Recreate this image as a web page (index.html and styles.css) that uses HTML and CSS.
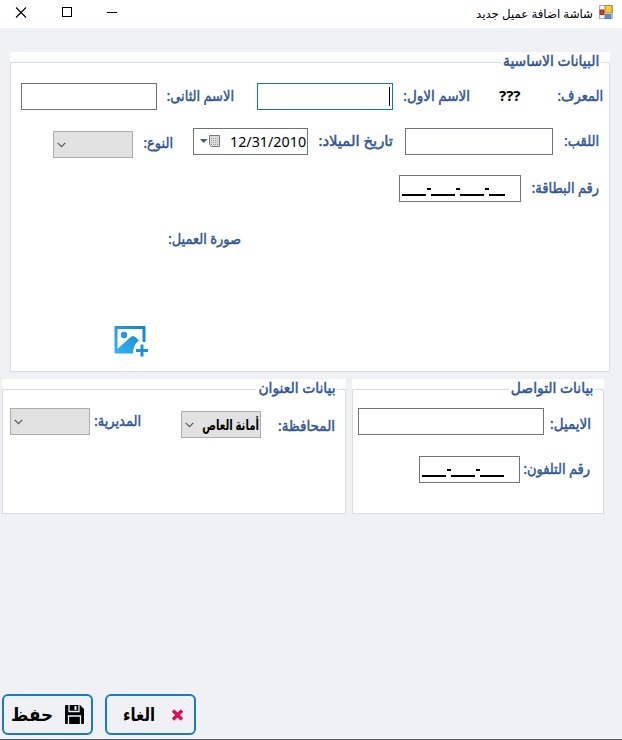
FILE: index.html
```html
<!DOCTYPE html>
<html lang="ar">
<head>
<meta charset="utf-8">
<title>شاشة اضافة عميل جديد</title>
<link rel="stylesheet" href="styles.css">
</head>
<body>
<div class="window">
  <header class="titlebar">
    <svg class="controls" width="120" height="28" viewBox="0 0 120 28" fill="none" stroke="#000" stroke-width="1.1">
      <path d="M16 7.5l10 10M26 7.5l-10 10"/>
      <path d="M62.5 7.5h9v9h-9zM107 12.5h10" stroke-width="1" shape-rendering="crispEdges"/>
    </svg>
    <span class="title">شاشة اضافة عميل جديد</span>
    <svg class="appicon" width="14" height="14" viewBox="0 0 14 14">
      <rect x=".5" y=".5" width="13" height="13" fill="#eef2f7" stroke="#aab4c0"/>
      <rect x="6" y=".5" width="7" height="7.500" fill="#f5c93c" stroke="#a98526" stroke-width=".8"/>
      <rect x="1" y="5" width="4" height="4.500" fill="#d83a2c" stroke="#8f2018" stroke-width=".8"/>
      <rect x="6" y="9.500" width="6" height="4" fill="#5c8fd6" stroke="#456ca5" stroke-width=".7"/>
    </svg>
  </header>

  <main class="form">
    <section class="group main-group">
      <h2 class="legend">البيانات الاساسية</h2>
      <div class="frame">
        <div class="row names">
          <div class="input w136"></div>
          <label class="w67">الاسم الثانى:</label>
          <div class="input focus w136"><i class="caret"></i></div>
          <label class="w67 wide">الاسم الاول:</label>
          <span class="id">???</span>
          <label class="w45">المعرف:</label>
        </div>
        <div class="row details">
          <div class="combo"><svg width="9" height="6" viewBox="0 0 9 6"><path d="M.7 .8l3.8 3.8L8.3 .8"/></svg></div>
          <label class="w30">النوع:</label>
          <div class="input date">
            <svg width="21" height="13" viewBox="0 0 21 13"><path d="M0 4h7.500L3.750 8z" fill="#42606b"/><path d="M9.500 .5h10v11h-8l-2-2z" fill="#ddd" stroke="#777"/><path d="M11 3.500h7M11 5.500h7M11 7.500h7M11 9.500h7" stroke="#999" stroke-dasharray="1 1"/></svg>
            <span>12/31/2010</span>
          </div>
          <label class="w75 full">تاريخ الميلاد:</label>
          <div class="input w148"></div>
          <label class="w36">اللقب:</label>
        </div>
        <div class="row card">
          <div class="input mask w122"><b class="u3"></b><i></i><b class="u3"></b><i></i><b class="u3"></b><i></i><b class="u2"></b></div>
          <label class="w68">رقم البطاقة:</label>
        </div>
        <div class="row photo"><label class="w74">صورة العميل:</label></div>
        <svg class="picture" width="34" height="32" viewBox="0 0 34 32">
          <defs><linearGradient id="sky" x1="0" y1="1" x2="1" y2="0"><stop offset="0" stop-color="#35b5f4"/><stop offset="1" stop-color="#1680c8"/></linearGradient></defs>
          <path fill="url(#sky)" fill-rule="evenodd" d="M1.500 1h29q1 0 1 1V17h-3V4H3.500v20L16 12.500q3-3 6 0l3 3q-6 4-6 13H1.500q-1 0-1-1V2q0-1 1-1z"/>
          <circle cx="10" cy="10" r="3.200" fill="#2797df"/>
          <path d="M28 19.500v12M22 25.500h12" stroke="#218fd6" stroke-width="3"/>
        </svg>
      </div>
    </section>

    <div class="columns">
      <section class="group address">
        <h2 class="legend">بيانات العنوان</h2>
        <div class="frame">
          <div class="row place">
            <div class="combo"><svg width="9" height="6" viewBox="0 0 9 6"><path d="M.7 .8l3.8 3.8L8.3 .8"/></svg></div>
            <label class="w48">المديرية:</label>
            <div class="combo city"><svg width="9" height="6" viewBox="0 0 9 6"><path d="M.7 .8l3.8 3.8L8.3 .8"/></svg><span>أمانة العاص</span></div>
            <label class="w58 wide">المحافظة:</label>
          </div>
        </div>
      </section>
      <section class="group contact">
        <h2 class="legend">بيانات التواصل</h2>
        <div class="frame">
          <div class="row email"><div class="input w186"></div><label class="w42 wide">الايميل:</label></div>
          <div class="row phone"><div class="input mask w101"><b class="u3"></b><i></i><b class="u3"></b><i></i><b class="u3"></b></div><label class="w67">رقم التلفون:</label></div>
        </div>
      </section>
    </div>
  </main>

  <footer class="actions">
    <button class="save"><span>حفظ</span>
      <svg width="19" height="19" viewBox="0 0 19 19"><path fill="#000" d="M1 0h14l4 4v14q0 1-1 1H1q-1 0-1-1V1q0-1 1-1z"/><path d="M4 0v6.500h10V0M3.500 19v-8h12v8" fill="none" stroke="#f0f1f5" stroke-width="1.300"/><path d="M9.500 1h2v4h-2z" fill="#f0f1f5"/></svg>
    </button>
    <button class="cancel"><span>الغاء</span>
      <svg width="13" height="12" viewBox="0 0 13 12"><path d="M2 1.500l9 9M11 1.500l-9 9" stroke="#d80f52" stroke-width="3.400"/></svg>
    </button>
  </footer>
</div>
</body>
</html>
```
FILE: styles.css
```css
* { box-sizing: border-box; }
body { margin: 0; font-family: "Segoe UI", "Noto Sans", "Open Sans", "DejaVu Sans", sans-serif; }
.window { width: 622px; height: 740px; background: #f0f1f5; display: flex; flex-direction: column; border-bottom: 1px solid #55585c; }
.titlebar { height: 28px; background: #fff; display: flex; align-items: flex-start; flex: none; }
.title { margin-left: auto; width: 117px; font-size: 11.800px; line-height: 26px; direction: rtl; white-space: nowrap; }
.appicon { margin: 5px 9px 0 6px; }
.form { padding-top: 24px; }
.group { background: #fff; padding-top: 10px; }
.main-group { margin: 0 12px 0 10px; height: 320px; }
.frame { border: 1px solid #d9dbe0; height: 100%; }
.row { display: flex; align-items: flex-start; height: 27px; }
.legend, label { color: #2f5597; font-size: 15px; font-weight: 400; -webkit-text-stroke: .5px #2f5597; direction: rtl; white-space: nowrap; transform: scaleX(.865); transform-origin: right center; }
.legend { width: fit-content; margin: -10px 9px -10px auto; padding: 0 2px; height: 20px; line-height: 17px; background: #fff; position: relative; transform: scaleX(.925); }
label { line-height: 24px; flex: none; }
.wide { transform: scaleX(.9); }
.full { transform: scaleX(.99); }
.input { height: 27px; border: 1px solid #70747a; background: #fff; flex: none; }
.focus { border-color: #0f77b4; }
.combo { width: 80px; height: 27px; border: 1px solid #adadad; background: #e1e1e1; flex: none; display: flex; align-items: center; padding-left: 3px; }
.combo svg { fill: none; stroke: #555; stroke-width: 1.2; flex: none; }
.caret { display: block; width: 1px; height: 19px; margin: 3px 2px 0 auto; background: #000; }
.w30 { width: 30px; } .w36 { width: 36px; } .w42 { width: 42px; } .w45 { width: 45px; } .w48 { width: 48px; } .w58 { width: 58px; }
.w67 { width: 67px; } .w68 { width: 68px; } .w74 { width: 74px; } .w75 { width: 75px; }
.w101 { width: 101px; } .w122 { width: 122px; } .w136 { width: 136px; } .w148 { width: 148px; } .w186 { width: 186px; }

.names { margin: 20px 0 0 10px; }
.names label { margin-left: 10px; }
.names .focus { margin-left: 23px; }
.id { width: 21px; margin-left: 29px; font-size: 15px; font-weight: 700; line-height: 25px; }
.names .id + label { margin-left: 38px; }
.details { margin: 18px 0 0 42px; }
.details label { margin-left: 10px; }
.details .combo { margin-top: 3px; }
.details .combo + label { margin-top: 2px; }
.date { width: 115px; margin-left: 20px; display: flex; align-items: center; padding-left: 6px; font-size: 14.300px; line-height: 25px; }
.date span { margin-left: 9px; }
.details .w148 { margin-left: 12px; }
.card { margin: 20px 0 0 388px; }
.card label { margin-left: 10px; }
.mask { display: flex; padding: 18px 0 0 2px; }
.mask b { height: 2px; background: #000; }
.mask i { width: 4px; height: 2px; margin: -6px .5px 0; background: #000; }
.u3 { width: 24px; } .u2 { width: 16px; }
.photo { margin: 24px 0 0 156px; }
.picture { display: block; margin: 72px 0 0 103px; }

.columns { display: flex; gap: 6px; margin: 7px 0 0 2px; }
.address { width: 344px; height: 135px; }
.contact { width: 252px; height: 135px; }
.place { margin: 18px 0 0 7px; }
.place label { margin-left: 3px; }
.place .city { margin: 3px 0 0 40px; }
.place .city + label { margin: 5px -1px 0 16px; }
.city span { width: 56px; margin-left: auto; margin-right: 1px; direction: rtl; font-size: 14.500px; font-weight: 700; white-space: nowrap; line-height: 25px; transform: scaleX(.7); transform-origin: right center; }
.email { margin: 18px 0 0 5px; }
.email label { margin: 3px 0 0 5px; }
.phone { margin: 21px 0 0 66px; }
.phone label { margin-left: 3px; }

.actions { display: flex; gap: 12px; margin: auto 0 4px 2px; }
button { width: 91px; height: 41px; border: 2px solid #1d78c5; border-radius: 6px; background: #f0f1f5; padding: 0 7px; display: flex; align-items: center; justify-content: space-between; font: 700 18px "Segoe UI", "Noto Sans", "DejaVu Sans", sans-serif; }
button span { margin-top: -2px; }
.save span { transform: scaleX(.93); transform-origin: left; }
.cancel { padding: 0 10px 0 16px; }
.cancel span { transform: scaleX(.82); transform-origin: left; }
```
